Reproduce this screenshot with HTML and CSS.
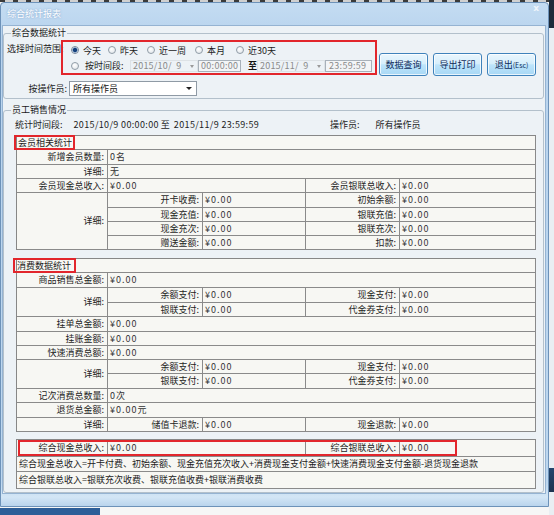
FILE: index.html
```html
<!DOCTYPE html>
<html>
<head>
<meta charset="utf-8">
<title>综合统计报表</title>
<link rel="stylesheet" href="styles.css">
</head>
<body>
<div class="desktop">
  <div class="window">
    <div class="titlebar"><span class="title">综合统计报表</span><span class="close">x</span></div>
    <div class="client">
      <fieldset class="group g1">
        <legend>综合数据统计</legend>
        <div class="rowA">
          <div class="lbl-range">选择时间范围:</div>
          <div class="redbox">
            <div class="rrow r1">
              <span class="opt o1"><span class="radio on"></span>今天</span>
              <span class="opt o2"><span class="radio"></span>昨天</span>
              <span class="opt o3"><span class="radio"></span>近一周</span>
              <span class="opt o4"><span class="radio"></span>本月</span>
              <span class="opt o5"><span class="radio"></span>近30天</span>
            </div>
            <div class="rrow r2">
              <span class="radio"></span>
              <span class="seg">按时间段:</span>
              <span class="date d1">2015/10/&ensp;9<span class="arr"></span></span>
              <span class="time tm1">00:00:00</span>
              <span class="zhi">至</span>
              <span class="date d2">2015/11/&ensp;9<span class="arr"></span></span>
              <span class="time tm2">23:59:59</span>
            </div>
          </div>
          <div class="btns">
            <span class="btn">数据查询</span>
            <span class="btn">导出打印</span>
            <span class="btn">退出<small>(Esc)</small></span>
          </div>
        </div>
        <div class="rowB">
          <span class="lbl-op">按操作员:</span>
          <span class="select">所有操作员<span class="sarr"></span></span>
        </div>
      </fieldset>

      <fieldset class="group g2">
        <legend>员工销售情况</legend>
        <div class="info">
          <span class="info-left"><span>统计时间段:</span><span class="dt1">2015/10/9 00:00:00</span><span class="zh">至</span><span class="dt2">2015/11/9 23:59:59</span></span>
          <span>操作员:</span><span class="opname">所有操作员</span>
        </div>

        <table class="grid">
          <colgroup><col class="c1"><col class="c2"><col class="c3"><col class="c4"><col class="c5"></colgroup>
          <tr class="h14"><td colspan="5" class="hd"><div class="tag">会员相关统计</div></td></tr>
          <tr class="h15"><td class="l">新增会员数量:</td><td colspan="4" class="v">0名</td></tr>
          <tr class="h14"><td class="l">详细:</td><td colspan="4" class="v">无</td></tr>
          <tr class="h14"><td class="l">会员现金总收入:</td><td colspan="2" class="v">¥0.00</td><td class="l">会员银联总收入:</td><td class="v">¥0.00</td></tr>
          <tr class="h15"><td rowspan="4" class="l">详细:</td><td class="l">开卡收费:</td><td class="v">¥0.00</td><td class="l">初始余额:</td><td class="v">¥0.00</td></tr>
          <tr class="h14"><td class="l">现金充值:</td><td class="v">¥0.00</td><td class="l">银联充值:</td><td class="v">¥0.00</td></tr>
          <tr class="h14"><td class="l">现金充次:</td><td class="v">¥0.00</td><td class="l">银联充次:</td><td class="v">¥0.00</td></tr>
          <tr class="h14"><td class="l">赠送金额:</td><td class="v">¥0.00</td><td class="l">扣款:</td><td class="v">¥0.00</td></tr>
        </table>

        <table class="grid grid2">
          <colgroup><col class="c1"><col class="c2"><col class="c3"><col class="c4"><col class="c5"></colgroup>
          <tr class="h14"><td colspan="5" class="hd"><div class="tag tag2">消费数据统计</div></td></tr>
          <tr class="h15"><td class="l">商品销售总金额:</td><td colspan="4" class="v">¥0.00</td></tr>
          <tr class="h15"><td rowspan="2" class="l">详细:</td><td class="l">余额支付:</td><td class="v">¥0.00</td><td class="l">现金支付:</td><td class="v">¥0.00</td></tr>
          <tr class="h14"><td class="l">银联支付:</td><td class="v">¥0.00</td><td class="l">代金券支付:</td><td class="v">¥0.00</td></tr>
          <tr class="h15"><td class="l">挂单总金额:</td><td colspan="4" class="v">¥0.00</td></tr>
          <tr class="h14"><td class="l">挂账金额:</td><td colspan="4" class="v">¥0.00</td></tr>
          <tr class="h14"><td class="l">快速消费总额:</td><td colspan="4" class="v">¥0.00</td></tr>
          <tr class="h14"><td rowspan="2" class="l">详细:</td><td class="l">余额支付:</td><td class="v">¥0.00</td><td class="l">现金支付:</td><td class="v">¥0.00</td></tr>
          <tr class="h15"><td class="l">银联支付:</td><td class="v">¥0.00</td><td class="l">代金券支付:</td><td class="v">¥0.00</td></tr>
          <tr class="h14"><td class="l">记次消费总数量:</td><td colspan="4" class="v">0次</td></tr>
          <tr class="h15"><td class="l">退货总金额:</td><td colspan="4" class="v">¥0.00元</td></tr>
          <tr class="h14"><td class="l">详细:</td><td class="l">储值卡退款:</td><td class="v">¥0.00</td><td class="l">现金退款:</td><td class="v">¥0.00</td></tr>
        </table>

        <div class="wrap3">
          <table class="grid">
            <colgroup><col class="c1"><col class="c2"><col class="c3"><col class="c4"><col class="c5"></colgroup>
            <tr class="h17"><td class="l">综合现金总收入:</td><td colspan="2" class="v">¥0.00</td><td class="l">综合银联总收入:</td><td class="v">¥0.00</td></tr>
            <tr class="h15"><td colspan="5" class="f">综合现金总收入=开卡付费、初始余额、现金充值充次收入+消费现金支付金额+快速消费现金支付金额-退货现金退款</td></tr>
            <tr class="h17"><td colspan="5" class="f">综合银联总收入=银联充次收费、银联充值收费+银联消费收费</td></tr>
          </table>
          <div class="hl"></div>
        </div>
      </fieldset>
    </div>
  </div>
</div>
</body>
</html>
```

FILE: styles.css
```css
* { box-sizing: border-box; }
html, body { margin: 0; padding: 0; }
body {
  font-family: "Noto Sans CJK SC", "Noto Sans", sans-serif;
  font-size: 9px;
  color: #1c1c1c;
  background: #f4f4f4;
}
.desktop {
  position: relative;
  width: 554px;
  height: 515px;
  overflow: hidden;
  background:
    linear-gradient(#2d5e98, #2d5e98) 0 508px / 100px 7px no-repeat,
    linear-gradient(#1d2b3b, #1d2b3b) 549px 0 / 5px 28px no-repeat,
    linear-gradient(#24466e, #1d3350) 549px 468px / 5px 24px no-repeat,
    linear-gradient(#e9eef3, #e9eef3) 549px 0 / 5px 515px no-repeat,
    repeating-linear-gradient(90deg, #3a3a3a 0 5px, #d0d0d0 5px 13px) 0 0 / 549px 2px no-repeat,
    #f6f6f6;
}
.window {
  position: absolute;
  left: 0;
  top: 2px;
  width: 549px;
  height: 505px;
  border: 1px solid #6d92b9;
  border-radius: 4px 4px 0 0;
  background: linear-gradient(#c4dcf2, #b9d4ee 30px, #bdd7ef 480px, #d3e6f6 494px, #b7d2ec 504px);
  display: flex;
  flex-direction: column;
  padding-bottom: 12px;
}
.titlebar {
  height: 22px;
  flex: none;
  display: flex;
  align-items: center;
  justify-content: space-between;
  padding: 0 9px 0 6px;
}
.title { color: #fff; line-height: 12px; text-shadow: 0 0 2px rgba(60,110,170,.6); }
.close { align-self: flex-start; color: #eef4fa; font-weight: bold; font-size: 9px; line-height: 10px; font-family: "DejaVu Sans", sans-serif; }

.client {
  flex: 1;
  margin: 0 2px 0 1px;
  border: 1px solid #95b3d2;
  background: #edf2f6;
  display: flex;
  flex-direction: column;
}

.group {
  margin: 0 1px 0 0;
  padding: 0;
  border: 1px solid #b3c0cb;
  border-radius: 3px;
  min-width: 0;
}
.group legend {
  font-size: 9px;
  line-height: 12px;
  padding: 0 1px;
  margin-left: 7px;
  color: #1a1a1a;
}
.g1 { margin-top: 1px; padding-bottom: 2px; }
.g2 { margin-top: 5px; flex: 1; }

/* top area */
.rowA { display: flex; align-items: flex-start; height: 37px; }
.lbl-range {
  flex: none;
  width: 57px;
  padding-left: 3px;
  margin-top: 4px;
  line-height: 12px;
  white-space: nowrap;
}
.redbox {
  flex: none;
  margin-top: 1px;
  width: 316px;
  height: 35px;
  border: 2px solid #e2262c;
}
.rrow { display: flex; align-items: center; padding-left: 8px; white-space: nowrap; }
.rrow > * { flex: none; }
.r1 { height: 16px; }
.r2 { height: 15px; }
.opt { display: flex; align-items: center; gap: 4px; }
.o1 { width: 37px; }
.o2 { width: 39px; }
.o3 { width: 48px; }
.o4 { width: 41px; }
.radio {
  width: 8px;
  height: 8px;
  flex: none;
  border-radius: 50%;
  border: 1px solid #909ca7;
  background: radial-gradient(circle at 40% 35%, #ffffff, #dce2e7);
}
.radio.on {
  border-color: #76869a;
  background: radial-gradient(circle, #143f7a 0 1.6px, #5b86b8 2.2px, #e6edf3 2.9px);
}
.seg { margin-left: 6px; width: 43px; }
.date {
  position: relative;
  width: 68px;
  height: 12px;
  line-height: 10px;
  padding-left: 2px;
  color: #8a8a8a;
  border: 1px solid #dde2e6;
  letter-spacing: 0.2px;
}
.d1 { margin-left: 2px; }
.arr {
  position: absolute;
  right: 3px;
  top: 4px;
  width: 0;
  height: 0;
  border-left: 2.5px solid transparent;
  border-right: 2.5px solid transparent;
  border-top: 3px solid #9a9a9a;
}
.time {
  height: 12px;
  line-height: 10px;
  padding-left: 2px;
  border: 1px solid #a8b1ba;
  background: #f3f5f7;
  color: #8a8a8a;
  letter-spacing: 0.3px;
}
.tm1 { width: 43px; }
.tm2 { width: 47px; padding-left: 3px; }
.zhi { margin-left: 7px; width: 9px; color: #111; font-weight: bold; }

.btns { display: flex; gap: 5px; margin-left: 2px; margin-top: 14px; }
.btn {
  width: 49px;
  height: 23px;
  display: flex;
  align-items: center;
  justify-content: center;
  border: 1px solid #3f82bb;
  border-radius: 3px;
  background: linear-gradient(#eaf6fd, #d7effc 45%, #bde4fb 52%, #a8d8f5);
  box-shadow: inset 0 0 0 1px rgba(255,255,255,.75);
  color: #0d2a5a;
  white-space: nowrap;
}
.btn small { font-size: 7px; }

.rowB { display: flex; align-items: center; height: 15px; margin-top: 5px; }
.lbl-op { width: 64px; text-align: right; padding-right: 1px; }
.select {
  position: relative;
  margin-left: 1px;
  width: 128px;
  height: 15px;
  line-height: 13px;
  padding-left: 3px;
  border: 1px solid #8f9aa5;
  background: #fff;
  color: #111;
}
.sarr {
  position: absolute;
  right: 4px;
  top: 5px;
  width: 0;
  height: 0;
  border-left: 3px solid transparent;
  border-right: 3px solid transparent;
  border-top: 3px solid #222;
}

/* sales area */
.info {
  display: flex;
  align-items: center;
  height: 14px;
  margin-top: 1px;
  margin-bottom: 4px;
  padding-left: 11px;
  white-space: nowrap;
}
.info-left { width: 315px; display: flex; }
.dt1 { margin-left: 11px; letter-spacing: 0.35px; }
.zh { margin-left: 2px; }
.dt2 { margin-left: 4px; letter-spacing: 0.35px; }
.opname { margin-left: 16px; }

.grid {
  table-layout: fixed;
  width: 520px;
  margin-left: 12px;
  border-collapse: separate;
  border-spacing: 0;
  border-top: 1px solid #878787;
  border-left: 1px solid #878787;
  background: #f7f7f3;
}
.grid td {
  border-right: 1px solid #8a8a8a;
  border-bottom: 1px solid #8a8a8a;
  padding: 0;
  line-height: 12px;
  white-space: nowrap;
  overflow: visible;
  vertical-align: middle;
}
.c1 { width: 91px; }
.c2 { width: 95px; }
.c3 { width: 103px; }
.c4 { width: 94px; }
.c5 { width: 136px; }
.h14 { height: 14px; }
.h15 { height: 15px; }
.h17 { height: 17px; }
.grid td.l { text-align: right; padding-right: 3px; color: #1e1e1e; }
.grid td.v { padding-left: 2px; color: #333; letter-spacing: 1px; }
.grid td.f { padding-left: 2px; }
.grid td.hd { padding: 0; }
.tag {
  position: relative;
  left: -3px;
  top: -1px;
  width: 61px;
  height: 15px;
  margin-bottom: -2px;
  border: 2px solid #e2262c;
  padding-left: 2px;
  line-height: 11px;
}
.tag2 { left: -4px; width: 63px; }
.grid2 { margin-top: 8px; }
.wrap3 { position: relative; margin-top: 7px; }
.hl {
  position: absolute;
  left: 14px;
  top: 1px;
  width: 439px;
  height: 16px;
  border: 2px solid #e2262c;
}
```
